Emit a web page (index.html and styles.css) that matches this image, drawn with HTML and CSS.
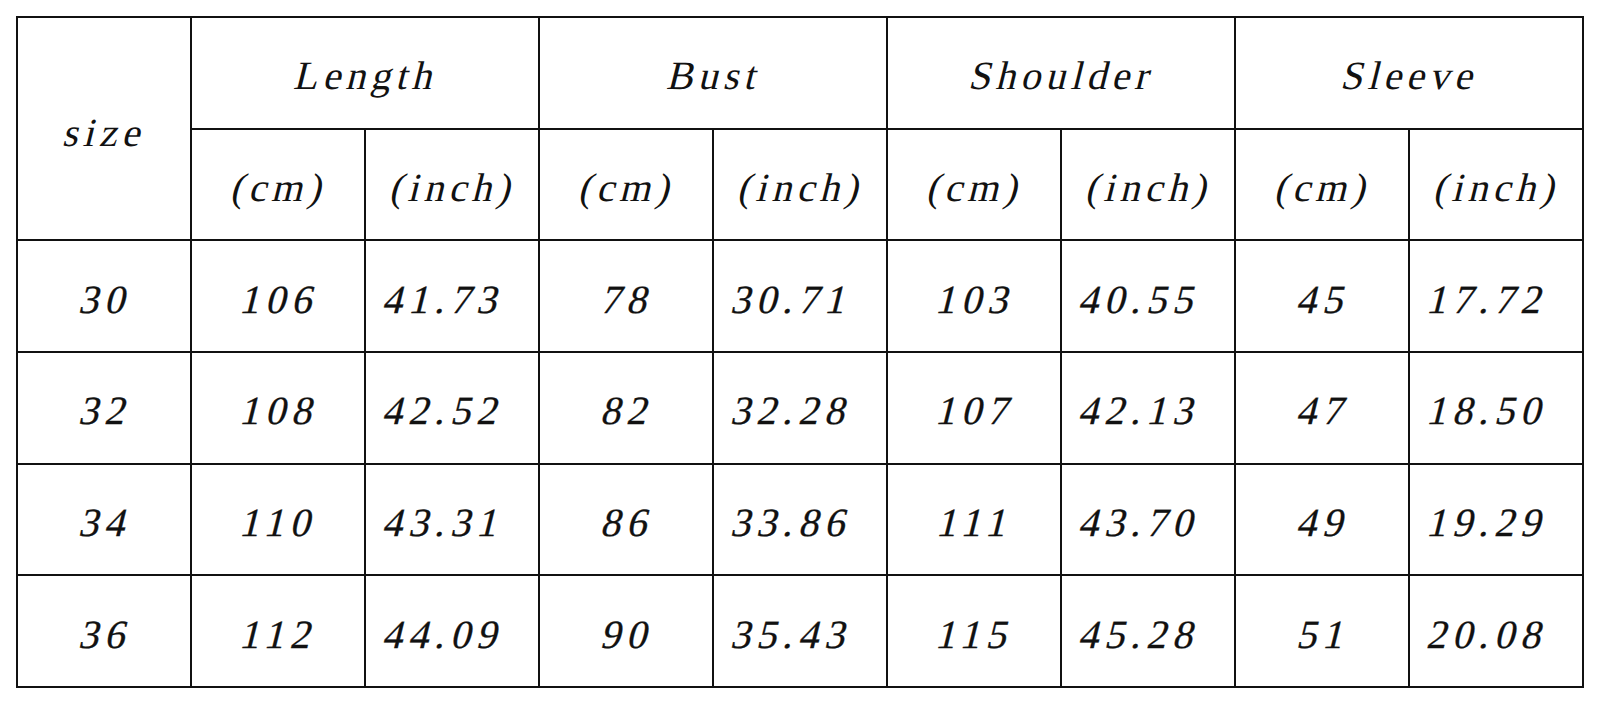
FILE: index.html
```html
<!DOCTYPE html>
<html>
<head>
<meta charset="utf-8">
<link rel="stylesheet" href="styles.css">
</head>
<body>
<table class="sizes">
  <colgroup>
    <col><col><col><col><col><col><col><col><col>
  </colgroup>
  <tr class="r-head">
    <td rowspan="2" class="size-label"><span>size</span></td>
    <td colspan="2"><span>Length</span></td>
    <td colspan="2"><span>Bust</span></td>
    <td colspan="2"><span>Shoulder</span></td>
    <td colspan="2"><span>Sleeve</span></td>
  </tr>
  <tr class="r-head">
    <td><span>(cm)</span></td><td><span>(inch)</span></td>
    <td><span>(cm)</span></td><td><span>(inch)</span></td>
    <td><span>(cm)</span></td><td><span>(inch)</span></td>
    <td><span>(cm)</span></td><td><span>(inch)</span></td>
  </tr>
  <tr class="r-data">
    <td><span>30</span></td><td><span>106</span></td><td class="dec"><span>41.73</span></td><td><span>78</span></td><td class="dec"><span>30.71</span></td><td><span>103</span></td><td class="dec"><span>40.55</span></td><td><span>45</span></td><td class="dec"><span>17.72</span></td>
  </tr>
  <tr class="r-data">
    <td><span>32</span></td><td><span>108</span></td><td class="dec"><span>42.52</span></td><td><span>82</span></td><td class="dec"><span>32.28</span></td><td><span>107</span></td><td class="dec"><span>42.13</span></td><td><span>47</span></td><td class="dec"><span>18.50</span></td>
  </tr>
  <tr class="r-data">
    <td><span>34</span></td><td><span>110</span></td><td class="dec"><span>43.31</span></td><td><span>86</span></td><td class="dec"><span>33.86</span></td><td><span>111</span></td><td class="dec"><span>43.70</span></td><td><span>49</span></td><td class="dec"><span>19.29</span></td>
  </tr>
  <tr class="r-data">
    <td><span>36</span></td><td><span>112</span></td><td class="dec"><span>44.09</span></td><td><span>90</span></td><td class="dec"><span>35.43</span></td><td><span>115</span></td><td class="dec"><span>45.28</span></td><td><span>51</span></td><td class="dec"><span>20.08</span></td>
  </tr>
</table>
</body>
</html>
```
FILE: styles.css
```css
html, body {
  margin: 0;
  padding: 0;
  background: #ffffff;
}
body {
  padding: 16px 0 0 16px;
  height: 704px;
  box-sizing: border-box;
  overflow: hidden;
}
.sizes {
  border-collapse: collapse;
  table-layout: fixed;
  width: 1568px;
  height: 672px;
  font-family: "Liberation Serif", "Times New Roman", serif;
  font-style: normal;
  font-size: 40px;
  letter-spacing: 5px;
  color: #111111;
}
.sizes col {
  width: 174px;
}
.sizes td {
  border: 2px solid #111111;
  padding: 7px 0 0 5px;
  text-align: center;
  vertical-align: middle;
  line-height: 1;
}
.sizes td span {
  display: inline-block;
  transform: skewX(-14deg);
}
.sizes tr {
  height: 111.7px;
}
.sizes .r-data td {
  letter-spacing: 6px;
  -webkit-text-stroke: 0.3px #111111;
}
.sizes td.dec {
  padding-right: 14px;
  padding-left: 0;
}
.sizes td.size-label {
  padding-top: 8px;
}
```
